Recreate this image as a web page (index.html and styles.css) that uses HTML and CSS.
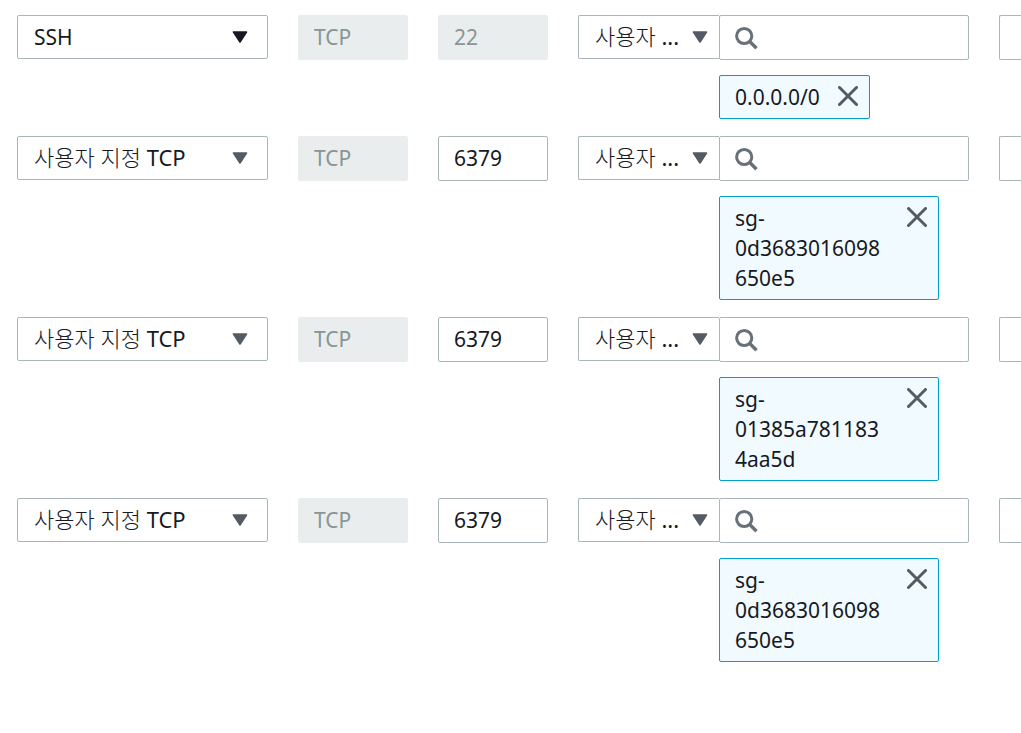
FILE: index.html
```html
<!DOCTYPE html>
<html lang="ko">
<head>
  <meta charset="UTF-8">
  <title>인바운드 규칙 편집</title>
  <link rel="stylesheet" href="styles.css">
</head>
<body>

  <!-- shared icons -->
  <svg class="sprite" aria-hidden="true">
    <symbol id="caret" viewBox="0 0 16 12">
      <path d="M1.5 1h13L8 11z" fill="currentColor" stroke="currentColor" stroke-width="1.6" stroke-linejoin="round"/>
    </symbol>
    <symbol id="search" viewBox="0 0 24 24">
      <circle cx="9.2" cy="10" r="7.6" fill="none" stroke="currentColor" stroke-width="3"/>
      <path d="M14.5 15.3l7 7" fill="none" stroke="currentColor" stroke-width="3.4"/>
    </symbol>
    <symbol id="close" viewBox="0 0 20 20">
      <path d="M1.5 1.5l17 17M18.5 1.5l-17 17" fill="none" stroke="currentColor" stroke-width="3" stroke-linecap="round"/>
    </symbol>
  </svg>

  <form class="rules">

    <!-- Rule 1: SSH -->
    <div class="rule">
      <div class="select type dark">
        <select aria-label="유형"><option>SSH</option></select>
        <svg class="caret"><use href="#caret"/></svg>
      </div>
      <input class="field" type="text" aria-label="프로토콜" value="TCP" disabled>
      <input class="field" type="text" aria-label="포트 범위" value="22" disabled>
      <div class="source">
        <div class="select korean">
          <select aria-label="소스 유형"><option>사용자 ...</option></select>
          <svg class="caret"><use href="#caret"/></svg>
        </div>
        <div class="search">
          <input class="field" type="text" aria-label="소스">
          <svg class="glass"><use href="#search"/></svg>
        </div>
        <div class="token">
          <span class="token-text">0.0.0.0/0</span>
          <button class="remove" type="button" aria-label="0.0.0.0/0 제거"><svg><use href="#close"/></svg></button>
        </div>
      </div>
      <input class="field description" type="text" aria-label="설명">
    </div>

    <!-- Rule 2 -->
    <div class="rule">
      <div class="select type korean">
        <select aria-label="유형"><option>사용자 지정 TCP</option></select>
        <svg class="caret"><use href="#caret"/></svg>
      </div>
      <input class="field" type="text" aria-label="프로토콜" value="TCP" disabled>
      <input class="field" type="text" aria-label="포트 범위" value="6379">
      <div class="source">
        <div class="select korean">
          <select aria-label="소스 유형"><option>사용자 ...</option></select>
          <svg class="caret"><use href="#caret"/></svg>
        </div>
        <div class="search">
          <input class="field" type="text" aria-label="소스">
          <svg class="glass"><use href="#search"/></svg>
        </div>
        <div class="token">
          <span class="token-text">sg-0d3683016098650e5</span>
          <button class="remove" type="button" aria-label="sg-0d3683016098650e5 제거"><svg><use href="#close"/></svg></button>
        </div>
      </div>
      <input class="field description" type="text" aria-label="설명">
    </div>

    <!-- Rule 3 -->
    <div class="rule">
      <div class="select type korean">
        <select aria-label="유형"><option>사용자 지정 TCP</option></select>
        <svg class="caret"><use href="#caret"/></svg>
      </div>
      <input class="field" type="text" aria-label="프로토콜" value="TCP" disabled>
      <input class="field" type="text" aria-label="포트 범위" value="6379">
      <div class="source">
        <div class="select korean">
          <select aria-label="소스 유형"><option>사용자 ...</option></select>
          <svg class="caret"><use href="#caret"/></svg>
        </div>
        <div class="search">
          <input class="field" type="text" aria-label="소스">
          <svg class="glass"><use href="#search"/></svg>
        </div>
        <div class="token">
          <span class="token-text">sg-01385a7811834aa5d</span>
          <button class="remove" type="button" aria-label="sg-01385a7811834aa5d 제거"><svg><use href="#close"/></svg></button>
        </div>
      </div>
      <input class="field description" type="text" aria-label="설명">
    </div>

    <!-- Rule 4 -->
    <div class="rule">
      <div class="select type korean">
        <select aria-label="유형"><option>사용자 지정 TCP</option></select>
        <svg class="caret"><use href="#caret"/></svg>
      </div>
      <input class="field" type="text" aria-label="프로토콜" value="TCP" disabled>
      <input class="field" type="text" aria-label="포트 범위" value="6379">
      <div class="source">
        <div class="select korean">
          <select aria-label="소스 유형"><option>사용자 ...</option></select>
          <svg class="caret"><use href="#caret"/></svg>
        </div>
        <div class="search">
          <input class="field" type="text" aria-label="소스">
          <svg class="glass"><use href="#search"/></svg>
        </div>
        <div class="token">
          <span class="token-text">sg-0d3683016098650e5</span>
          <button class="remove" type="button" aria-label="sg-0d3683016098650e5 제거"><svg><use href="#close"/></svg></button>
        </div>
      </div>
      <input class="field description" type="text" aria-label="설명">
    </div>

  </form>

</body>
</html>
```

FILE: styles.css
```css
* {
  box-sizing: border-box;
}

body {
  margin: 0;
  background-color: #fff;
  color: #16191f;
  font-family: "Noto Sans", "Noto Sans CJK KR Light", "Noto Sans CJK KR", sans-serif;
  font-size: 21px;
  line-height: 30px;
}

.sprite {
  display: none;
}

.rules {
  display: flex;
  flex-direction: column;
  gap: 17px;
  padding: 15px 0 15px 17px;
}

.rule {
  display: grid;
  grid-template-columns: minmax(0, 251fr) minmax(0, 110fr) minmax(0, 110fr) minmax(0, 391fr) minmax(0, 22fr);
  column-gap: 30px;
  align-items: start;
}

.field {
  width: 100%;
  min-width: 0;
  height: 45px;
  padding: 0 15px 2px;
  border: 1px solid #aab7b8;
  border-radius: 2px;
  background-color: #fff;
  color: inherit;
  font: inherit;
}

.field:disabled {
  border-color: #e9eded;
  background-color: #e9eded;
  color: #879596;
}

/* sits flush against the right edge */
.description {
  padding: 0;
  border-right: none;
  border-radius: 2px 0 0 2px;
}

.select,
.search {
  display: grid;
  align-items: center;
  min-width: 0;
}

.select > *,
.search > * {
  grid-area: 1 / 1;
}

.select select {
  appearance: none;
  width: 100%;
  height: 44px;
  padding: 0 16px;
  border: 1px solid #aab7b8;
  border-radius: 2px;
  background-color: #fff;
  color: #16191f;
  font: inherit;
}

.korean select {
  padding-bottom: 2px;
  font-size: 22px;
}

.caret {
  justify-self: end;
  width: 16px;
  height: 12px;
  margin-right: 11px;
  color: #545b64;
  pointer-events: none;
}

.type .caret {
  margin-right: 20px;
}

.dark .caret {
  color: #16191f;
}

.source {
  display: grid;
  grid-template-columns: minmax(0, 141fr) minmax(0, 250fr);
  row-gap: 15px;
  align-items: start;
}

.source select {
  padding-right: 0;
  border-right: none;
  border-radius: 2px 0 0 2px;
}

.search .field {
  padding-left: 48px;
}

.glass {
  width: 24px;
  height: 24px;
  margin-left: 16px;
  color: #687078;
  pointer-events: none;
}

.token {
  grid-column: 2;
  justify-self: start;
  display: flex;
  align-items: flex-start;
  gap: 18px;
  max-width: 88%;
  padding: 6px 11px 6px 15px;
  border: 1px solid #00a1c9;
  border-radius: 2px;
  background-color: #f1faff;
}

.token-text {
  min-width: 0;
  overflow-wrap: anywhere;
}

.remove {
  flex: none;
  display: flex;
  margin: 4px 0 0;
  padding: 0;
  border: none;
  background: none;
  color: #545b64;
  cursor: pointer;
}

.remove svg {
  width: 20px;
  height: 20px;
}
```
